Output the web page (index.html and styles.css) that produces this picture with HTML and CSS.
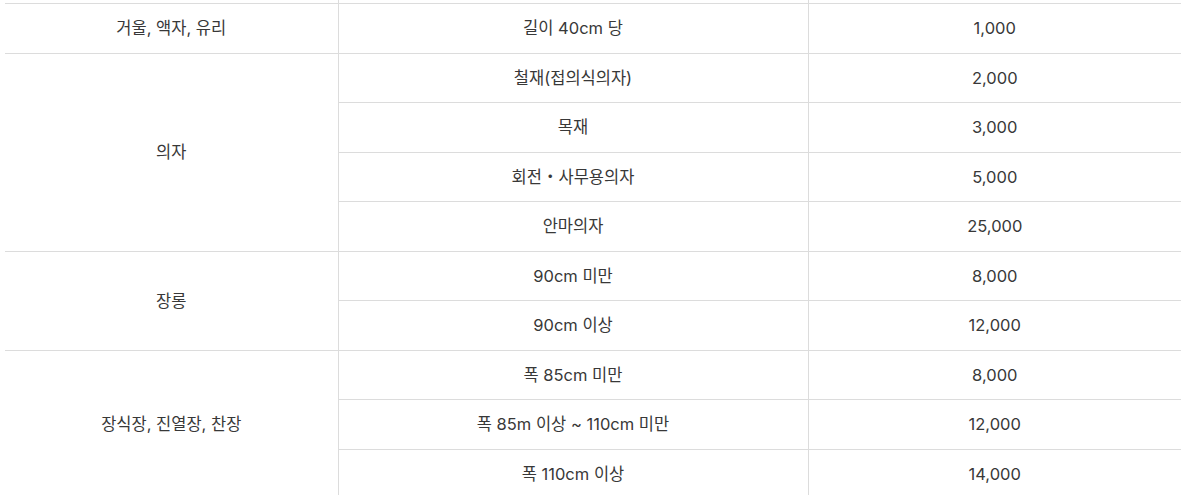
FILE: index.html
```html
<!DOCTYPE html>
<html lang="ko">
<head>
<meta charset="utf-8">
<link rel="stylesheet" href="styles.css">
</head>
<body>
<div class="wrap">
<table class="fee">
  <colgroup><col class="c1"><col class="c2"><col class="c3"></colgroup>
  <tbody>
    <tr class="prev"><td class="cat"></td><td></td><td></td></tr>
    <tr><td class="cat">거울, 액자, 유리</td><td>길이 40cm 당</td><td>1,000</td></tr>
    <tr><td class="cat" rowspan="4">의자</td><td>철재(접의식의자)</td><td>2,000</td></tr>
    <tr><td>목재</td><td>3,000</td></tr>
    <tr><td>회전・사무용의자</td><td>5,000</td></tr>
    <tr><td>안마의자</td><td>25,000</td></tr>
    <tr><td class="cat" rowspan="2">장롱</td><td>90cm 미만</td><td>8,000</td></tr>
    <tr><td>90cm 이상</td><td>12,000</td></tr>
    <tr><td class="cat" rowspan="3">장식장, 진열장, 찬장</td><td>폭 85cm 미만</td><td>8,000</td></tr>
    <tr><td>폭 85m 이상 ~ 110cm 미만</td><td>12,000</td></tr>
    <tr><td>폭 110cm 이상</td><td>14,000</td></tr>
  </tbody>
</table>
</div>
</body>
</html>
```
FILE: styles.css
```css
html, body {
  margin: 0;
  padding: 0;
  background: #fff;
}
.wrap {
  padding: 0 4px 0 5px;
  margin-top: -45.5px;
}
.fee {
  width: 1176px;
  border-collapse: collapse;
  table-layout: fixed;
  font-family: Inter, "Noto Sans CJK KR", sans-serif;
  font-size: 16.5px;
  color: #383838;
}
.c1 { width: 333px; }
.c2 { width: 470px; }
.c3 { width: 373px; }
.fee td {
  height: 48.5px;
  padding: 0;
  text-align: center;
  vertical-align: middle;
  border-top: 1px solid #dcdcdc;
  border-left: 1px solid #dcdcdc;
  line-height: 20px;
}
.fee td.cat {
  border-left: none;
}
.fee tr.prev td { border-top: none; }
```
